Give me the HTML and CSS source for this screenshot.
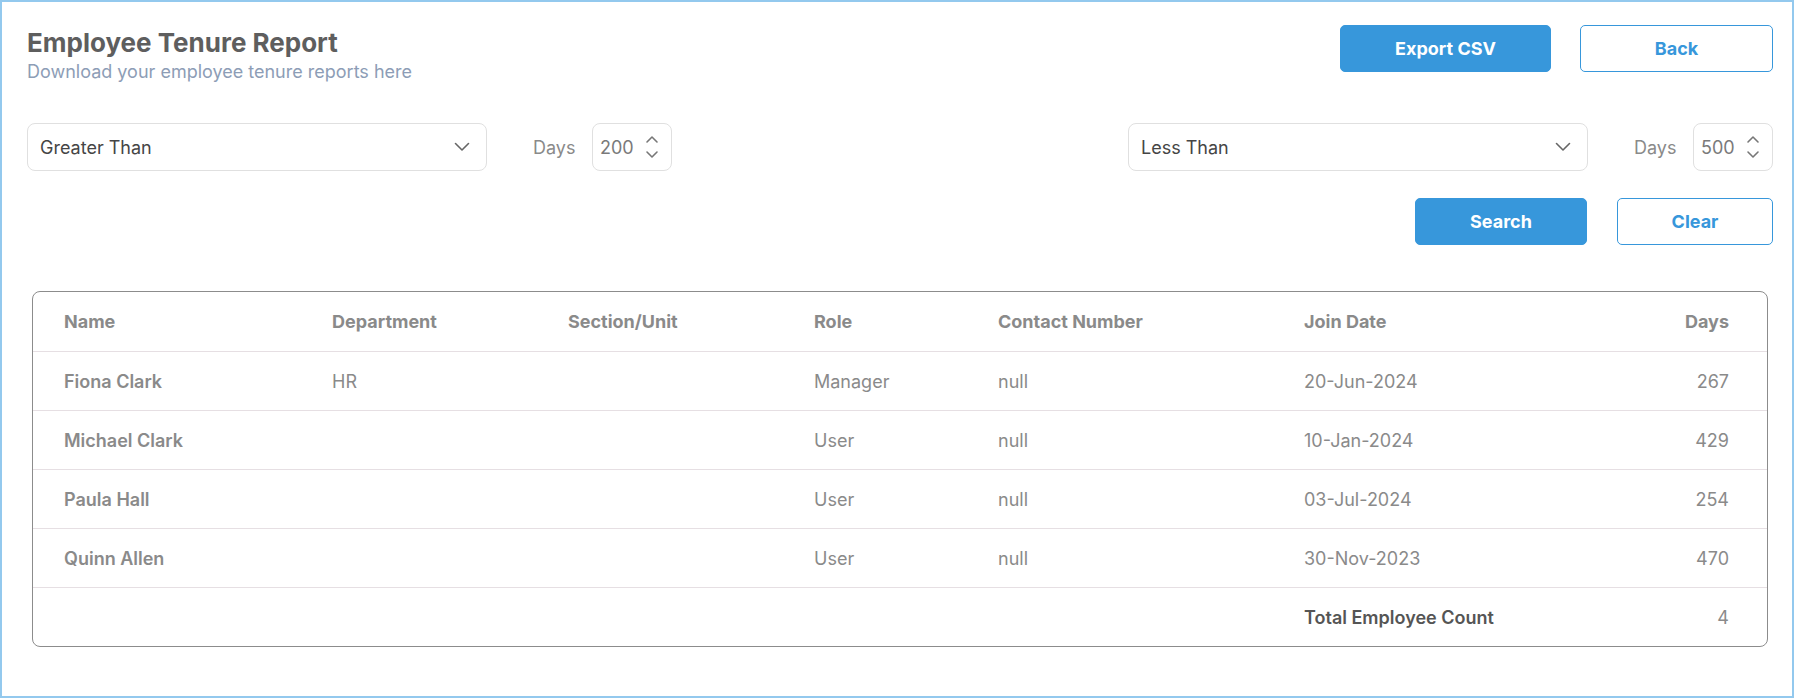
FILE: index.html
```html
<!DOCTYPE html>
<html lang="en">
<head>
<meta charset="utf-8">
<title>Employee Tenure Report</title>
<link rel="stylesheet" href="styles.css">
</head>
<body>
<div class="page">
  <header class="head">
    <div class="titles">
      <h1 class="title">Employee Tenure Report</h1>
      <p class="subtitle">Download your employee tenure reports here</p>
    </div>
    <div class="actions">
      <button class="btn btn-primary btn-export">Export CSV</button>
      <button class="btn btn-outline btn-back">Back</button>
    </div>
  </header>

  <div class="filters">
    <div class="filter">
      <div class="select">
        <span>Greater Than</span>
        <svg class="chev" width="16" height="10" viewBox="0 0 16 10"><path d="M1.5 1.5 L8 8 L14.5 1.5" fill="none" stroke="#666" stroke-width="1.6" stroke-linecap="round" stroke-linejoin="round"/></svg>
      </div>
      <span class="days-label">Days</span>
      <div class="num">
        <span>200</span>
        <svg class="spin" width="14" height="26" viewBox="0 0 14 26"><path d="M2 8 L7 3 L12 8" fill="none" stroke="#777" stroke-width="1.6" stroke-linecap="round" stroke-linejoin="round"/><path d="M2 18 L7 23 L12 18" fill="none" stroke="#777" stroke-width="1.6" stroke-linecap="round" stroke-linejoin="round"/></svg>
      </div>
    </div>
    <div class="filter">
      <div class="select">
        <span>Less Than</span>
        <svg class="chev" width="16" height="10" viewBox="0 0 16 10"><path d="M1.5 1.5 L8 8 L14.5 1.5" fill="none" stroke="#666" stroke-width="1.6" stroke-linecap="round" stroke-linejoin="round"/></svg>
      </div>
      <span class="days-label">Days</span>
      <div class="num">
        <span>500</span>
        <svg class="spin" width="14" height="26" viewBox="0 0 14 26"><path d="M2 8 L7 3 L12 8" fill="none" stroke="#777" stroke-width="1.6" stroke-linecap="round" stroke-linejoin="round"/><path d="M2 18 L7 23 L12 18" fill="none" stroke="#777" stroke-width="1.6" stroke-linecap="round" stroke-linejoin="round"/></svg>
      </div>
    </div>
  </div>

  <div class="search-row">
    <button class="btn btn-primary btn-search">Search</button>
    <button class="btn btn-outline btn-clear">Clear</button>
  </div>

  <div class="card">
    <table class="report">
      <colgroup>
        <col class="c-name"><col class="c-dept"><col class="c-sect"><col class="c-role"><col class="c-contact"><col class="c-join"><col class="c-days">
      </colgroup>
      <thead>
        <tr><th>Name</th><th>Department</th><th>Section/Unit</th><th>Role</th><th>Contact Number</th><th>Join Date</th><th class="r">Days</th></tr>
      </thead>
      <tbody>
        <tr><td class="nm">Fiona Clark</td><td>HR</td><td></td><td>Manager</td><td>null</td><td>20-Jun-2024</td><td class="r">267</td></tr>
        <tr><td class="nm">Michael Clark</td><td></td><td></td><td>User</td><td>null</td><td>10-Jan-2024</td><td class="r">429</td></tr>
        <tr><td class="nm">Paula Hall</td><td></td><td></td><td>User</td><td>null</td><td>03-Jul-2024</td><td class="r">254</td></tr>
        <tr><td class="nm">Quinn Allen</td><td></td><td></td><td>User</td><td>null</td><td>30-Nov-2023</td><td class="r">470</td></tr>
        <tr class="total"><td></td><td></td><td></td><td></td><td></td><td class="tl">Total Employee Count</td><td class="r">4</td></tr>
      </tbody>
    </table>
  </div>
</div>
</body>
</html>
```

FILE: styles.css
```css
* { box-sizing: border-box; }
html, body { margin: 0; padding: 0; background: #fff; }
body { font-family: Inter, "Noto Sans", "Liberation Sans", sans-serif; }

.page {
  width: 1794px;
  height: 698px;
  border: 2px solid #93c9ee;
  padding: 23px 19px 0 25px;
}

.head {
  display: flex;
  justify-content: space-between;
  align-items: flex-start;
}
.titles { margin-top: 2px; }
.title {
  margin: 0;
  font-size: 26px;
  line-height: 31px;
  font-weight: 700;
  color: #5e5e5e;
}
.subtitle {
  margin: 3px 0 0;
  font-size: 18px;
  line-height: 22px;
  color: #8d9db6;
}
.actions { display: flex; gap: 29px; }

.btn {
  font-family: inherit;
  font-size: 18px;
  font-weight: 700;
  height: 47px;
  border-radius: 5px;
  cursor: pointer;
}
.btn-primary { background: #3797db; color: #fff; border: 1px solid #3797db; }
.btn-outline { background: #fff; color: #3797db; border: 1px solid #3797db; }
.btn-export { width: 211px; }
.btn-back { width: 193px; }
.btn-search { width: 172px; }
.btn-clear { width: 156px; }

.filters {
  margin-top: 40px;
  display: flex;
  justify-content: space-between;
}
.filter { display: flex; align-items: center; }
.select {
  width: 460px;
  height: 48px;
  border: 1px solid #e0e0e0;
  border-radius: 8px;
  display: flex;
  align-items: center;
  justify-content: space-between;
  padding: 0 16px 0 12px;
  font-size: 18px;
  color: #454545;
}
.days-label {
  margin-left: 46px;
  width: 59px;
  font-size: 18px;
  color: #8a8a8a;
}
.num {
  width: 80px;
  height: 48px;
  border: 1px solid #e0e0e0;
  border-radius: 8px;
  display: flex;
  align-items: center;
  justify-content: space-between;
  padding: 0 12px 0 7px;
  font-size: 18px;
  color: #7a7a7a;
}

.search-row {
  margin-top: 27px;
  display: flex;
  justify-content: flex-end;
  gap: 30px;
}

.card {
  margin: 46px 5px 0;
  border: 1px solid #8c8c8c;
  border-radius: 8px;
  overflow: hidden;
}
.report {
  width: 100%;
  border-collapse: collapse;
  table-layout: fixed;
}
.c-name { width: 299px; }
.c-dept { width: 236px; }
.c-sect { width: 246px; }
.c-role { width: 184px; }
.c-contact { width: 306px; }
.c-join { width: 300px; }
.report th, .report td {
  height: 59px;
  padding: 0;
  text-align: left;
  font-size: 18px;
  color: #8a8a8a;
  white-space: nowrap;
}
.report th { font-weight: 700; }
.report td { font-weight: 400; padding-top: 2px; }
.report tbody tr { border-top: 1px solid #e6dfe3; }
.report th:first-child, .report td:first-child { padding-left: 31px; }
.report .r { text-align: right; padding-right: 38px; }
.report td.nm { font-weight: 600; }
.report td.tl { font-weight: 600; color: #555; }
```
